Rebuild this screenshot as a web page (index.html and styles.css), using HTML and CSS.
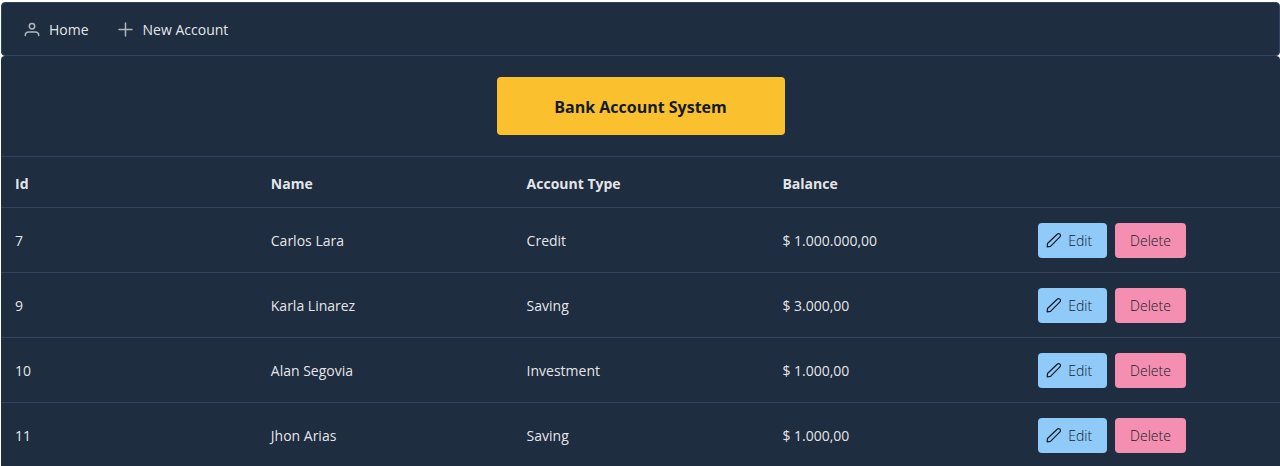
FILE: index.html
```html
<!DOCTYPE html>
<html lang="en">
<head>
  <meta charset="UTF-8">
  <title>Bank Account System</title>
  <meta name="viewport" content="width=device-width, initial-scale=1.0">
  <link rel="stylesheet" href="styles.css">
</head>
<body>
  <!-- Icons shared by the menu and the table -->
  <svg class="icon-defs" aria-hidden="true">
    <symbol id="icon-user" viewBox="0 0 16 16">
      <circle cx="8" cy="4.2" r="2.7"/>
      <path d="M1.3 13.6v-.4c0-1.900 1.600-3.200 3.600-3.200h6.200c2 0 3.600 1.300 3.600 3.200v.4"/>
    </symbol>
    <symbol id="icon-plus" viewBox="0 0 16 16">
      <path d="M7.500 1v13M1 7.500h13"/>
    </symbol>
    <symbol id="icon-pencil" viewBox="0 0 16 16">
      <path d="M1.200 13.800l.3-3.300L11.200 1.200a1.900 1.900 0 0 1 2.700 0a1.900 1.900 0 0 1 0 2.700L4.500 13.400z"/>
    </symbol>
  </svg>

  <nav class="menubar">
    <a class="menu-link" href="#">
      <svg class="icon"><use href="#icon-user"/></svg>
      <span>Home</span>
    </a>
    <a class="menu-link" href="#">
      <svg class="icon"><use href="#icon-plus"/></svg>
      <span>New Account</span>
    </a>
  </nav>

  <main class="card">
    <header class="card-header">
      <h1 class="title">Bank Account System</h1>
    </header>

    <table class="accounts">
      <thead>
        <tr>
          <th>Id</th>
          <th>Name</th>
          <th>Account Type</th>
          <th>Balance</th>
          <th></th>
        </tr>
      </thead>
      <tbody>
        <tr>
          <td>7</td>
          <td>Carlos Lara</td>
          <td>Credit</td>
          <td>$ 1.000.000,00</td>
          <td>
            <div class="actions">
              <button type="button" class="btn btn-edit"><svg class="icon"><use href="#icon-pencil"/></svg>Edit</button>
              <button type="button" class="btn btn-delete">Delete</button>
            </div>
          </td>
        </tr>
        <tr>
          <td>9</td>
          <td>Karla Linarez</td>
          <td>Saving</td>
          <td>$ 3.000,00</td>
          <td>
            <div class="actions">
              <button type="button" class="btn btn-edit"><svg class="icon"><use href="#icon-pencil"/></svg>Edit</button>
              <button type="button" class="btn btn-delete">Delete</button>
            </div>
          </td>
        </tr>
        <tr>
          <td>10</td>
          <td>Alan Segovia</td>
          <td>Investment</td>
          <td>$ 1.000,00</td>
          <td>
            <div class="actions">
              <button type="button" class="btn btn-edit"><svg class="icon"><use href="#icon-pencil"/></svg>Edit</button>
              <button type="button" class="btn btn-delete">Delete</button>
            </div>
          </td>
        </tr>
        <tr>
          <td>11</td>
          <td>Jhon Arias</td>
          <td>Saving</td>
          <td>$ 1.000,00</td>
          <td>
            <div class="actions">
              <button type="button" class="btn btn-edit"><svg class="icon"><use href="#icon-pencil"/></svg>Edit</button>
              <button type="button" class="btn btn-delete">Delete</button>
            </div>
          </td>
        </tr>
      </tbody>
    </table>
  </main>
</body>
</html>
```
FILE: styles.css
```css
* {
  box-sizing: border-box;
}
body {
  margin: 0;
  padding: 2px 0 0 1px;
  background: #fff;
  color: rgba(255, 255, 255, 0.9);
  font-family: "Segoe UI", "Open Sans", sans-serif;
  font-size: 14px;
  line-height: 20px;
}
.icon-defs {
  display: none;
}
.icon {
  width: 16px;
  height: 16px;
  flex: none;
  fill: none;
  stroke: currentColor;
  stroke-width: 1.2;
  stroke-linecap: round;
  stroke-linejoin: round;
}
/* Top menu */
.menubar {
  display: flex;
  gap: 29px;
  padding: 17px 22px 15px;
  background: #1f2d40;
  border: 1px solid #304562;
  border-radius: 4px;
}
.menu-link {
  display: flex;
  align-items: center;
  gap: 9px;
  color: inherit;
  text-decoration: none;
}
.menu-link .icon {
  color: rgba(255, 255, 255, 0.65);
  stroke-width: 1.5;
}
/* Account list */
.card {
  background: #1f2d40;
  border-radius: 4px 4px 0 0;
}
.card-header {
  display: flex;
  justify-content: center;
  padding: 21px 14px;
  border-bottom: 1px solid #304562;
}
.title {
  width: 288px;
  margin: 0;
  padding: 20px 0 18px;
  border-radius: 4px;
  background: #fbc02d;
  color: #121b27;
  font-size: 16px;
  font-weight: 700;
  line-height: 20px;
  text-align: center;
}
.accounts {
  width: 100%;
  table-layout: fixed;
  border-spacing: 0;
}
.accounts th,
.accounts td {
  padding: 15px 14px 14px;
  border-bottom: 1px solid #304562;
  text-align: left;
}
.accounts th {
  padding: 17px 14px 13px;
  font-weight: 700;
}
.actions {
  display: flex;
  gap: 8px;
}
.btn {
  display: flex;
  align-items: center;
  justify-content: center;
  gap: 6px;
  height: 35px;
  padding: 0 15px;
  border: 0;
  border-radius: 4px;
  color: #121b27;
  font-family: inherit;
  font-size: 14px;
  font-weight: 300;
}
.btn-edit {
  padding-left: 8px;
  background: #90caf9;
}
.btn-delete {
  background: #f48fb1;
}
```
